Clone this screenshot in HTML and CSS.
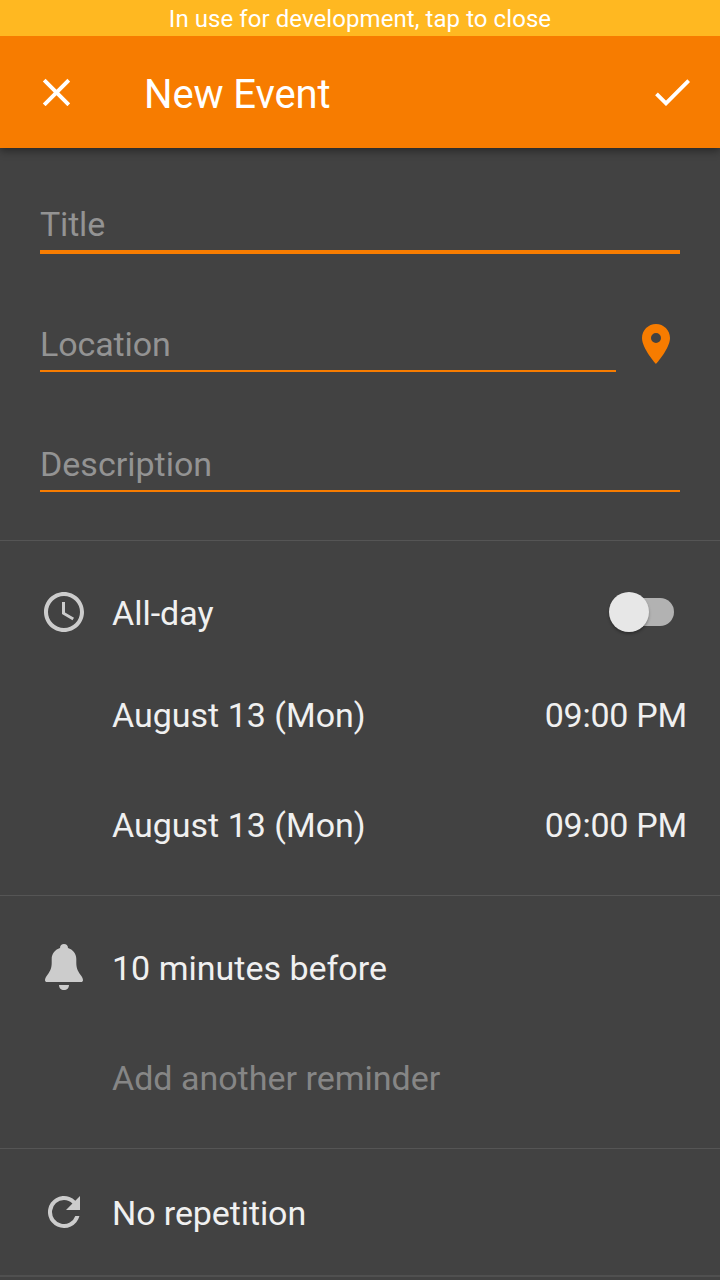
FILE: index.html
```html
<!DOCTYPE html>
<html lang="en">
<head>
<meta charset="utf-8">
<title>New Event</title>
<link rel="stylesheet" href="styles.css">
</head>
<body>
<div class="notice">In use for development, tap to close</div>
<header class="toolbar">
<svg class="close" width="28" height="28" viewBox="0 0 28 28"><path d="M2.200 2.200l24.600 24.600M26.800 2.200L2.200 26.800" fill="none" stroke="#fff" stroke-width="3.900"/></svg>
<h1>New Event</h1>
<svg class="done" width="36" height="28" viewBox="0 0 36 28"><path d="M2.500 15.800l9.500 9.500L34.700 2.600" fill="none" stroke="#fff" stroke-width="3.900"/></svg>
</header>
<main>
<section class="fields">
<div class="field focused">Title</div>
<div class="location"><div class="field">Location</div>
<svg class="pin" width="28" height="40" viewBox="5 2 14 20"><path fill="#f77c00" d="M12 2C8.130 2 5 5.130 5 9c0 5.250 7 13 7 13s7-7.750 7-13c0-3.870-3.130-7-7-7zm0 9.500a2.500 2.500 0 1 1 0-5 2.500 2.500 0 0 1 0 5z"/></svg></div>
<div class="field">Description</div>
</section>
<section class="time">
<div class="row allday"><svg class="icon" width="48" height="48" viewBox="0 0 24 24"><path fill="#ccc" d="M11.990 2C6.470 2 2 6.480 2 12s4.470 10 9.990 10C17.520 22 22 17.520 22 12S17.520 2 11.990 2zM12 20a8 8 0 1 1 0-16 8 8 0 0 1 0 16zm.5-13H11v6l5.250 3.150.75-1.230-4.500-2.670z"/></svg><span class="label">All-day</span><div class="switch"><div class="thumb"></div></div></div>
<div class="row date"><span>August 13 (Mon)</span><span class="clock">09:00 PM</span></div>
<div class="row date"><span>August 13 (Mon)</span><span class="clock">09:00 PM</span></div>
</section>
<section class="reminders">
<div class="row"><svg class="icon" width="48" height="48" viewBox="0 0 48 48"><path fill="#ccc" d="M24 0c-2.300 0-4 1.600-4 4-4.700 1.600-8.300 5.500-8.300 11v4c0 6-2.200 9-4.700 12.500-1.300 1.800-2 3.300-2 4.700 0 1.200.8 1.800 2 1.800h34c1.200 0 2-.6 2-1.800 0-1.400-.7-2.900-2-4.700-2.500-3.500-4.700-6.500-4.700-12.500v-4c0-5.500-3.600-9.400-8.300-11 0-2.400-1.700-4-4-4zM19 41h10c0 3-2 5-5 5s-5-2-5-5z"/></svg><span>10 minutes before</span></div>
<div class="row muted"><span>Add another reminder</span></div>
</section>
<section class="repeat">
<div class="row"><svg class="icon" width="48" height="48" viewBox="0 .5 24 24"><path fill="#ccc" d="M17.650 6.350A8 8 0 1 0 19.730 14h-2.080A6 6 0 1 1 12 6c1.660 0 3.140.69 4.220 1.780L13 11h7V4z"/></svg><span class="repeat-label">No repetition</span></div>
</section>
</main>
</body>
</html>
```
FILE: styles.css
```css
* { box-sizing: border-box; }
body { margin: 0; width: 720px; height: 1280px; overflow: hidden; background: #424242; color: #f0f0f0; font: 34px/40px Roboto, sans-serif; }
svg { display: block; flex: none; }
.notice { position: relative; z-index: 1; height: 36px; background: #ffb821; color: #fff; text-align: center; font-size: 24px; line-height: 38px; letter-spacing: .07px; }
.toolbar { height: 112px; display: flex; align-items: center; padding: 0 30px 0 42px; background: #f77c00; box-shadow: 0 3px 8px rgba(0,0,0,.4); }
.toolbar h1 { margin: 6px auto 0 74px; font-size: 40px; line-height: 48px; font-weight: 400; letter-spacing: -.1px; color: #fff; }
.fields { height: 393px; border-bottom: 1px solid #555; padding: 52px 40px 0; }
.field { height: 52px; margin-bottom: 68px; padding-top: 4px; border-bottom: 2px solid #f77c00; color: #939393; }
.focused { height: 54px; border-bottom-width: 4px; margin-bottom: 66px; letter-spacing: -.2px; }
.location { display: flex; justify-content: space-between; padding-right: 10px; }
.location .field { width: 576px; letter-spacing: -.1px; }
.pin { margin-top: 4px; }
.time { height: 355px; border-bottom: 1px solid #555; padding-top: 31px; }
.reminders { height: 253px; border-bottom: 1px solid #555; padding-top: 32px; }
.repeat { height: 128px; border-bottom: 2px solid #505050; padding-top: 24px; }
.row { height: 80px; display: flex; align-items: center; padding-left: 40px; }
.allday { margin-bottom: 8px; }
.label { padding-top: 2px; }
.icon { margin-right: 24px; }
.switch { width: 65px; height: 28px; margin: 0 46px 0 auto; display: flex; align-items: center; background: linear-gradient(#b2b2b2, #b2b2b2) right / 45px 28px no-repeat; border-radius: 0 14px 14px 0; }
.thumb { width: 40px; height: 40px; flex: none; border-radius: 50%; background: #e7e7e7; box-shadow: 0 2px 3px rgba(0,0,0,.3); }
.date { justify-content: space-between; padding: 0 33px 0 112px; height: 110px; }
.clock { letter-spacing: -.25px; }
.muted { padding-left: 112px; height: 140px; color: #868686; }
.repeat-label { letter-spacing: -.1px; }
```
